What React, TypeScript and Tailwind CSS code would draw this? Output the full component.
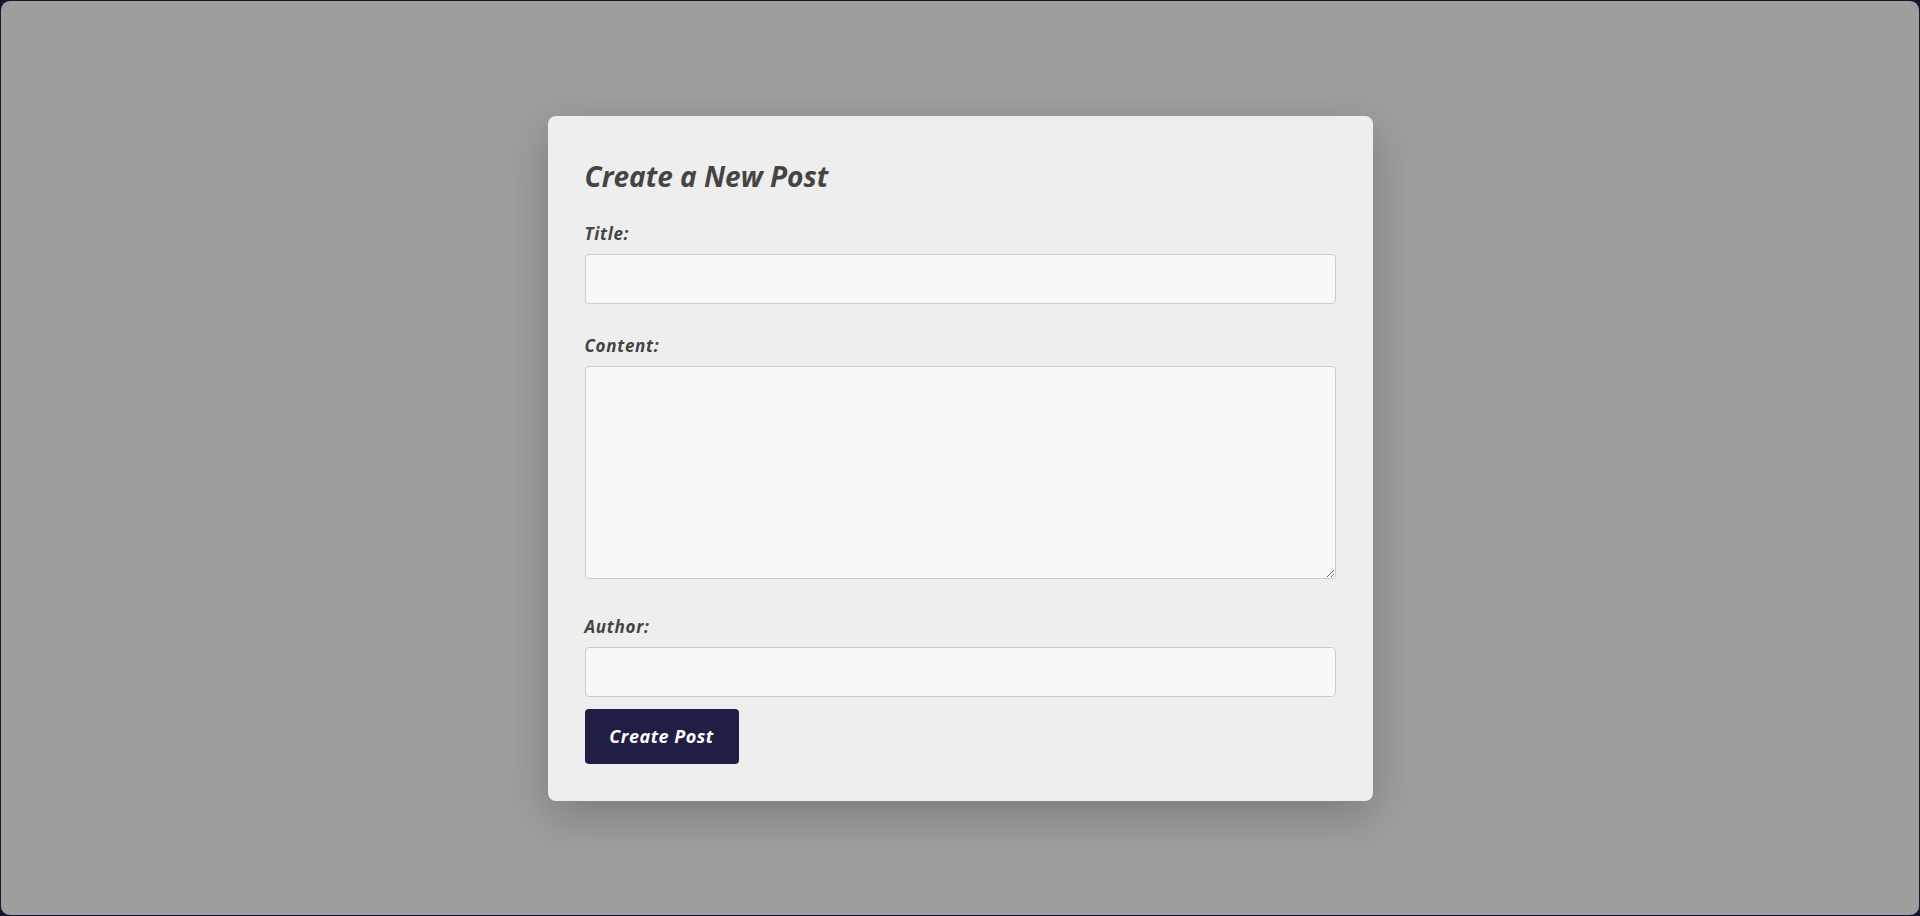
import { useState } from "react";

export default function App() {
  const [title, setTitle] = useState("");
  const [content, setContent] = useState("");
  const [author, setAuthor] = useState("");

  return (
    <div className="h-[916px] w-full bg-[#16152e]">
      <div
        className="flex h-full w-full items-center justify-center rounded-[10px] border border-[#16152e] bg-[#9e9e9e]"
        style={{ fontFamily: "'Open Sans', Lato, sans-serif" }}
      >
        <form
          onSubmit={(e) => e.preventDefault()}
          className="flex w-[825px] flex-col rounded-lg bg-[#eeeeee] px-[37px] pt-[42px] pb-[37px] text-[#444444] shadow-[0_15px_45px_rgba(0,0,0,0.22)]"
        >
          <h2 className="mb-[28px] text-[28px] leading-[36px] font-bold italic">
            Create a New Post
          </h2>

          <label htmlFor="title" className="mb-2 block text-[17px] leading-6 font-bold italic tracking-[0.7px]">
            Title:
          </label>
          <input
            id="title"
            value={title}
            onChange={(e) => setTitle(e.target.value)}
            className="mb-[30px] h-[50px] w-full rounded border border-[#cccccc] bg-[#f9f8f6] px-3 outline-none"
          />

          <label htmlFor="content" className="mb-2 block text-[17px] leading-6 font-bold italic tracking-[0.7px]">
            Content:
          </label>
          <textarea
            id="content"
            value={content}
            onChange={(e) => setContent(e.target.value)}
            className="mb-[36px] block h-[213px] w-full rounded border border-[#cccccc] bg-[#f9f8f6] px-3 py-2 outline-none"
          />

          <label htmlFor="author" className="mb-2 block text-[17px] leading-6 font-bold italic tracking-[0.7px]">
            Author:
          </label>
          <input
            id="author"
            value={author}
            onChange={(e) => setAuthor(e.target.value)}
            className="mb-[12px] h-[50px] w-full rounded border border-[#cccccc] bg-[#f9f8f6] px-3 outline-none"
          />

          <div>
            <button
              type="submit"
              className="h-[55px] w-[154px] rounded bg-[#201e45] text-[18px] font-bold tracking-[0.5px] text-white italic"
            >
              Create Post
            </button>
          </div>
        </form>
      </div>
    </div>
  );
}
